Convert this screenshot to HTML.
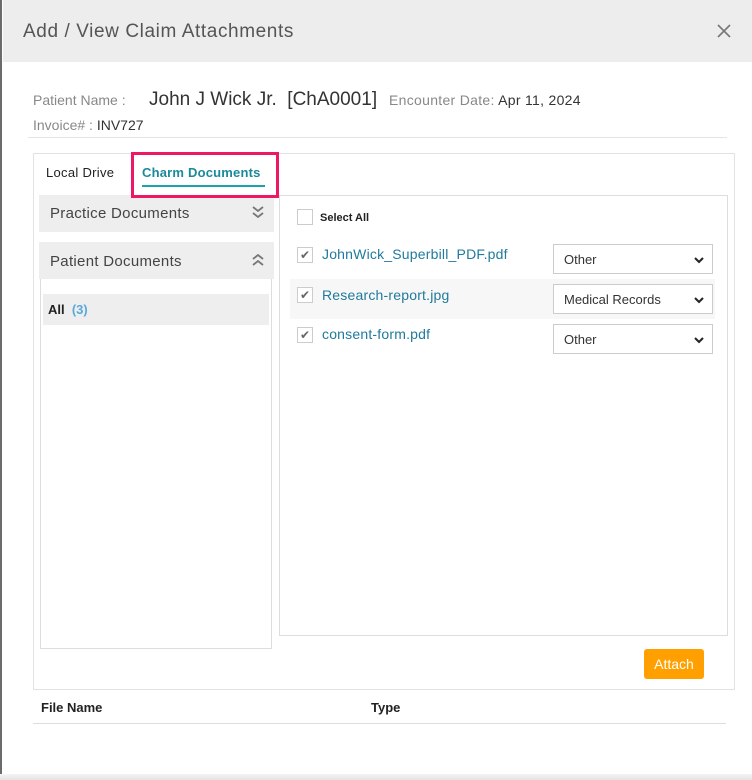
<!DOCTYPE html>
<html><head><style>
*{box-sizing:border-box;margin:0;padding:0}
body{width:752px;height:780px;background:#fff;font-family:"Liberation Sans",sans-serif;position:relative;overflow:hidden}
.a{position:absolute}
.chk{position:absolute;width:16px;height:16px;border:1px solid #ccc;background:#fff;font-size:12px;color:#666;line-height:14px;text-align:center}
.sel{position:absolute;left:553px;width:160px;height:30px;border:1px solid #ccc;background:#fff;font-size:13px;color:#333;padding:7px 10px}
.sel svg{position:absolute;right:8px;top:11px}
.fn{position:absolute;left:322px;font-size:14px;color:#1f7a9c;letter-spacing:0.2px}
</style></head><body>
<div class="a" style="left:0;top:0;width:2px;height:780px;background:#6b6b6b"></div>
<div class="a" style="left:3px;top:0;width:749px;height:62px;background:#ededed"></div>
<div class="a" style="left:23px;top:21px;font-size:19px;color:#555;letter-spacing:0.6px">Add / View Claim Attachments</div>
<svg class="a" style="left:716px;top:23px" width="16" height="16"><path d="M2 2L14 14M14 2L2 14" stroke="#777" stroke-width="1.6"/></svg>
<div class="a" style="left:33px;top:92px;font-size:14px;color:#888">Patient Name :</div>
<div class="a" style="left:149px;top:89px;font-size:19px;color:#333">John J Wick Jr. &nbsp;[ChA0001]</div>
<div class="a" style="left:389px;top:92px;font-size:14px;color:#888;letter-spacing:0.3px">Encounter Date: <span style="color:#333">Apr 11, 2024</span></div>
<div class="a" style="left:33px;top:117px;font-size:14px;color:#888">Invoice# : <span style="color:#333">INV727</span></div>
<div class="a" style="left:28px;top:137px;width:699px;height:1px;background:#e4e4e4"></div>
<div class="a" style="left:33px;top:153px;width:702px;height:537px;border:1px solid #e2e2e2"></div>
<div class="a" style="left:46px;top:165px;font-size:13px;color:#222;letter-spacing:0.3px">Local Drive</div>
<div class="a" style="left:142px;top:165px;font-size:13px;color:#1a8a9a;font-weight:bold;letter-spacing:0.2px">Charm Documents</div>
<div class="a" style="left:142px;top:185px;width:123px;height:2px;background:#1aa3a8"></div>
<div class="a" style="left:39px;top:195px;width:235px;height:37px;background:#eee"></div>
<div class="a" style="left:50px;top:205px;font-size:15px;color:#444;letter-spacing:0.3px">Practice Documents</div>
<svg class="a" style="left:251px;top:205px" width="14" height="14"><path d="M2 2L7 6L12 2M2 8L7 12L12 8" fill="none" stroke="#777" stroke-width="1.8"/></svg>
<div class="a" style="left:39px;top:242px;width:235px;height:37px;background:#eee"></div>
<div class="a" style="left:50px;top:253px;font-size:15px;color:#444;letter-spacing:0.3px">Patient Documents</div>
<svg class="a" style="left:251px;top:252px" width="14" height="14"><path d="M2 7L7 3L12 7M2 13L7 9L12 13" fill="none" stroke="#777" stroke-width="1.8"/></svg>
<div class="a" style="left:40px;top:279px;width:232px;height:370px;border:1px solid #ddd;border-top:none"></div>
<div class="a" style="left:43px;top:294px;width:226px;height:31px;background:#eee"></div>
<div class="a" style="left:48px;top:302px;font-size:13px;font-weight:bold;color:#222">All &nbsp;<span style="color:#5aa9dc">(3)</span></div>
<div class="a" style="left:279px;top:195px;width:449px;height:441px;border:1px solid #ddd"></div>
<div class="chk" style="left:297px;top:209px"></div>
<div class="a" style="left:320px;top:212px;font-size:11px;font-weight:bold;color:#222">Select All</div>
<div class="a" style="left:290px;top:279px;width:425px;height:40px;background:#f7f7f7"></div>
<div class="chk" style="left:297px;top:247px">✔</div>
<div class="fn" style="top:246px">JohnWick_Superbill_PDF.pdf</div>
<div class="chk" style="left:297px;top:287px">✔</div>
<div class="fn" style="top:287px">Research-report.jpg</div>
<div class="chk" style="left:297px;top:327px">✔</div>
<div class="fn" style="top:326px">consent-form.pdf</div>
<div class="sel" style="top:244px">Other<svg width="10" height="8"><path d="M1 2L5 6L9 2" fill="none" stroke="#222" stroke-width="2"/></svg></div>
<div class="sel" style="top:284px">Medical Records<svg width="10" height="8"><path d="M1 2L5 6L9 2" fill="none" stroke="#222" stroke-width="2"/></svg></div>
<div class="sel" style="top:324px">Other<svg width="10" height="8"><path d="M1 2L5 6L9 2" fill="none" stroke="#222" stroke-width="2"/></svg></div>
<div class="a" style="left:644px;top:649px;width:60px;height:30px;background:#ffa000;border-radius:3px;color:#fff;font-size:14px;text-align:center;line-height:30px">Attach</div>
<div class="a" style="left:41px;top:700px;font-size:13px;font-weight:bold;color:#222">File Name</div>
<div class="a" style="left:371px;top:700px;font-size:13px;font-weight:bold;color:#222">Type</div>
<div class="a" style="left:33px;top:723px;width:693px;height:1px;background:#ddd"></div>
<div class="a" style="left:131px;top:152px;width:148px;height:46px;border:3px solid #ee1763"></div>
<div class="a" style="left:0;top:774px;width:752px;height:6px;background:linear-gradient(#f4f4f4,#e2e2e2)"></div>
</body></html>
